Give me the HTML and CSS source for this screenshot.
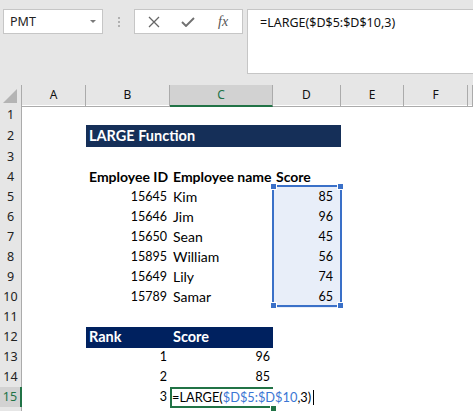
FILE: index.html
```html
<!DOCTYPE html>
<html lang="en">

<head>
    <meta charset="UTF-8">
    <meta name="viewport" content="width=device-width, initial-scale=1.0">
    <title>LARGE Function</title>
    <link rel="stylesheet" href="styles.css">
</head>

<body>
    <!-- Name box + formula bar -->
    <div class="toolbar">
        <div class="name-box">
            <span>PMT</span>
            <span class="caret"></span>
        </div>
        <div class="grip"><i></i><i></i><i></i></div>
        <div class="fx-box">
            <svg class="icon" viewBox="0 0 12 12" width="12" height="12">
                <path d="M1 1 L11 11 M11 1 L1 11" stroke="#666" stroke-width="1.3" fill="none" />
            </svg>
            <svg class="icon" viewBox="0 0 14 10" width="14" height="10">
                <path d="M1 5 L5 9 L13 1" stroke="#707070" stroke-width="1.9" fill="none" />
            </svg>
            <span class="fx">fx</span>
        </div>
        <div class="formula-input">=LARGE($D$5:$D$10,3)</div>
    </div>

    <!-- Sheet -->
    <div class="sheet">
        <div class="row head">
            <div class="corner">
                <svg viewBox="0 0 14 14" width="14" height="14">
                    <polygon points="14,0 14,14 0,14" fill="#b4b4b4" />
                </svg>
            </div>
            <div class="col-head">A</div>
            <div class="col-head">B</div>
            <div class="col-head active">C</div>
            <div class="col-head">D</div>
            <div class="col-head">E</div>
            <div class="col-head">F</div>
            <div class="col-head"></div>
        </div>

        <div class="row"><div class="row-head">1</div></div>

        <div class="row tall">
            <div class="row-head">2</div>
            <div class="cell"></div>
            <div class="band">LARGE Function</div>
        </div>

        <div class="row tall"><div class="row-head">3</div></div>

        <div class="row">
            <div class="row-head">4</div>
            <div class="cell"></div>
            <div class="cell bold">Employee ID</div>
            <div class="cell bold">Employee name</div>
            <div class="cell bold">Score</div>
        </div>

        <div class="row">
            <div class="row-head">5</div>
            <div class="cell"></div>
            <div class="cell num">15645</div>
            <div class="cell">Kim</div>
            <div class="cell num picked">85</div>
        </div>
        <div class="row">
            <div class="row-head">6</div>
            <div class="cell"></div>
            <div class="cell num">15646</div>
            <div class="cell">Jim</div>
            <div class="cell num picked">96</div>
        </div>
        <div class="row">
            <div class="row-head">7</div>
            <div class="cell"></div>
            <div class="cell num">15650</div>
            <div class="cell">Sean</div>
            <div class="cell num picked">45</div>
        </div>
        <div class="row">
            <div class="row-head">8</div>
            <div class="cell"></div>
            <div class="cell num">15895</div>
            <div class="cell">William</div>
            <div class="cell num picked">56</div>
        </div>
        <div class="row">
            <div class="row-head">9</div>
            <div class="cell"></div>
            <div class="cell num">15649</div>
            <div class="cell">Lily</div>
            <div class="cell num picked">74</div>
        </div>
        <div class="row">
            <div class="row-head">10</div>
            <div class="cell"></div>
            <div class="cell num">15789</div>
            <div class="cell">Samar</div>
            <div class="cell num picked">65</div>
        </div>

        <div class="row"><div class="row-head">11</div></div>

        <div class="row">
            <div class="row-head">12</div>
            <div class="cell"></div>
            <div class="cell hdr">Rank</div>
            <div class="cell hdr">Score</div>
        </div>
        <div class="row">
            <div class="row-head">13</div>
            <div class="cell"></div>
            <div class="cell num">1</div>
            <div class="cell num">96</div>
        </div>
        <div class="row">
            <div class="row-head">14</div>
            <div class="cell"></div>
            <div class="cell num">2</div>
            <div class="cell num">85</div>
        </div>
        <div class="row">
            <div class="row-head active">15</div>
            <div class="cell"></div>
            <div class="cell num">3</div>
            <div class="cell editing">=LARGE(<span class="ref">$D$5:$D$10</span>,3)<span class="cursor"></span></div>
        </div>
        <div class="row"><div class="row-head"></div></div>

        <!-- range highlight for D5:D10 -->
        <div class="range">
            <i class="handle tl"></i><i class="handle tr"></i>
            <i class="handle bl"></i><i class="handle br"></i>
        </div>
    </div>
</body>

</html>
```

FILE: styles.css
```css
body {
    margin: 0;
    width: 473px;
    height: 411px;
    overflow: hidden;
    background: #fff;
    font-family: Lato, "Liberation Sans", sans-serif;
    color: #000;
}

/* ---- formula bar ---- */
.toolbar {
    display: flex;
    align-items: flex-start;
    height: 85px;
    box-sizing: border-box;
    padding: 9px 0 0 3px;
    background: #e6e6e6;
    font-family: "Noto Sans", "Open Sans", sans-serif;
}

.name-box {
    display: flex;
    align-items: center;
    justify-content: space-between;
    width: 100px;
    height: 25px;
    box-sizing: border-box;
    padding: 0 6px 0 6px;
    background: #fff;
    border: 1px solid #c6c6c6;
    font-size: 12.5px;
    color: #222;
}

.caret {
    width: 0;
    height: 0;
    border-left: 3px solid transparent;
    border-right: 3px solid transparent;
    border-top: 3px solid #7a7a7a;
}

.grip {
    display: flex;
    flex-direction: column;
    align-items: center;
    gap: 2px;
    width: 31px;
    padding-top: 8px;
}

.grip i {
    width: 2px;
    height: 2px;
    background: #b0b0b0;
}

.fx-box {
    display: flex;
    align-items: center;
    width: 109px;
    height: 25px;
    box-sizing: border-box;
    padding-left: 13px;
    gap: 21px;
    background: #fff;
    border: 1px solid #c6c6c6;
}

.fx {
    font-family: "Liberation Serif", serif;
    font-style: italic;
    font-size: 14px;
    color: #555;
    margin-left: 2px;
}

.formula-input {
    flex: 1;
    height: 65px;
    box-sizing: border-box;
    margin-left: 4px;
    padding: 4px 0 0 12px;
    background: #fff;
    border: 1px solid #c6c6c6;
    border-right: none;
    font-size: 12.5px;
    line-height: 18px;
    color: #111;
}

/* ---- sheet ---- */
.sheet {
    position: relative;
}

.row {
    display: grid;
    grid-template-columns: 22px 64px 84px 103px 68px 63px 64px 1fr;
    height: 20px;
    font-size: 14px;
    line-height: 20px;
}

.row.tall {
    height: 21px;
    line-height: 21px;
}

.row.head {
    background: #e6e6e6;
    font-family: "Noto Sans", "Open Sans", sans-serif;
    font-size: 12px;
}

.corner {
    display: flex;
    align-items: flex-end;
    justify-content: flex-end;
    padding: 0 4px 3px 0;
    border-right: 1px solid #ababab;
    border-bottom: 1px solid #ababab;
}

.col-head {
    text-align: center;
    color: #111;
    border-right: 1px solid #ababab;
    border-bottom: 1px solid #ababab;
    box-sizing: border-box;
}

.col-head.active {
    background: #d2d2d2;
    color: #217346;
    border-bottom: 2px solid #217346;
}

.row-head {
    background: #e6e6e6;
    text-align: center;
    font-family: "Noto Sans", "Open Sans", sans-serif;
    font-size: 12.5px;
    color: #222;
    border-right: 1px solid #ababab;
    border-bottom: 1px solid #d0d0d0;
    box-sizing: border-box;
}

.row-head.active {
    background: #d2d2d2;
    color: #217346;
    border-right: 2px solid #217346;
}

.cell {
    padding: 0 3px;
    white-space: nowrap;
}

.cell.num {
    text-align: right;
    font-size: 12.5px;
}

.cell.picked {
    background: #e8eef9;
    padding-right: 8px;
}

.bold {
    font-weight: bold;
}

.band {
    grid-column: 3 / 6;
    background: #152f58;
    color: #fff;
    font-weight: bold;
    font-size: 14.5px;
    padding: 0 3px;
}

.cell.hdr {
    background: #00215f;
    color: #fff;
    font-weight: bold;
    font-size: 14.5px;
}

/* cell in edit mode: text runs over the right edge */
.cell.editing {
    position: relative;
    padding-left: 2px;
    font-size: 12.8px;
    box-shadow: inset 2px 0 #217346, inset 0 2px #217346, inset 0 -2px #217346;
}

.cell.editing::after {
    content: "";
    position: absolute;
    right: -3px;
    bottom: -3px;
    width: 5px;
    height: 5px;
    background: #217346;
    box-shadow: 0 0 0 1px #fff;
}

.ref {
    color: #3b76d4;
}

.cursor {
    display: inline-block;
    width: 1px;
    height: 15px;
    margin-left: 2px;
    background: #000;
    vertical-align: -3px;
}

/* D5:D10 reference outline */
.range {
    position: absolute;
    left: 272px;
    top: 100px;
    width: 70px;
    height: 122px;
    box-sizing: border-box;
    border: 2px solid #3a70c8;
}

.handle {
    position: absolute;
    width: 5px;
    height: 5px;
    background: #3a70c8;
    box-shadow: 0 0 0 1px #fff;
}

.handle.tl { left: -3px; top: -3px; }
.handle.tr { right: -3px; top: -3px; }
.handle.bl { left: -3px; bottom: -3px; }
.handle.br { right: -3px; bottom: -3px; }
```
